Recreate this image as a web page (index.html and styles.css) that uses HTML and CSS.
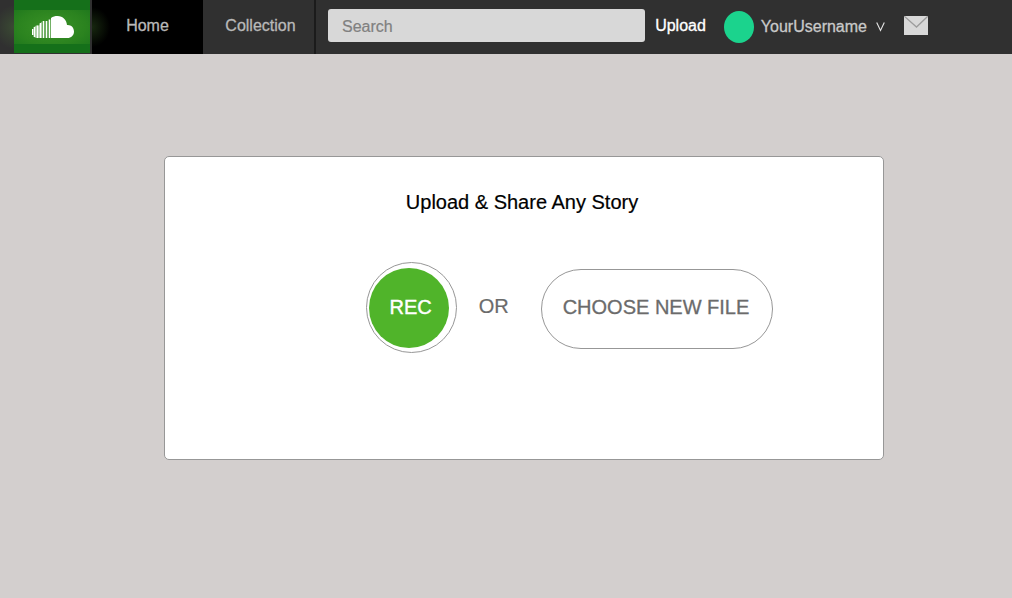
FILE: index.html
```html
<!DOCTYPE html>
<html lang="en">
<head>
<meta charset="utf-8">
<meta name="viewport" content="width=device-width, initial-scale=1">
<title>Upload</title>
<link rel="stylesheet" href="styles.css">
</head>
<body>
<header class="topbar">
  <a class="logo" href="#" aria-label="Start page">
    <svg class="logo-cloud" viewBox="0 0 42 22" aria-hidden="true">
      <path class="cloud" d="M19 22V2C21 .6 23 0 25.500 0C31 0 34.600 4 35 9C39 8.600 42 11.500 42 15.500C42 19.500 39 22 35.500 22Z"/>
      <path class="haze" d="M2 11L4 9.500H7L8.500 7L10 5.500V22H4L2 21Z"/>
      <path class="bar" d="M.5 13v6M2.500 11v10M5.500 9.500v12.500M8.500 7v15M11.500 5v17M14.500 5v17M17.500 3.500v18.500"/>
    </svg>
  </a>
  <nav class="nav">
    <a class="nav-link nav-current" href="#" aria-current="page">Home</a>
    <a class="nav-link" href="#">Collection</a>
  </nav>
  <input class="search" type="search" placeholder="Search" aria-label="Search">
  <a class="upload" href="#">Upload</a>
  <button class="account" type="button">
    <span class="avatar"></span>
    <span class="username">YourUsername</span>
    <svg class="chevron" viewBox="0 0 9 10" aria-hidden="true"><path d="M.7.5L4.500 8.500L8.300.5"/></svg>
  </button>
  <button class="mail" type="button" aria-label="Messages">
    <svg class="mail-icon" viewBox="0 0 24 19" aria-hidden="true"><rect width="24" height="19"/><path d="M0 0L12.500 11L24 0"/></svg>
  </button>
</header>
<main class="page">
  <section class="card">
    <h1 class="title">Upload &amp; Share Any Story</h1>
    <div class="actions">
      <button class="record" type="button"><span class="record-disc">REC</span></button>
      <span class="or">OR</span>
      <button class="choose" type="button">CHOOSE NEW FILE</button>
    </div>
  </section>
</main>
</body>
</html>
```
FILE: styles.css
```css
* {
  box-sizing: border-box;
}

body {
  margin: 0;
  min-height: 100vh;
  background: #d3cfce;
  color: #000;
  font-family: "Liberation Sans", Arial, sans-serif;
  font-size: 16px;
}

button {
  padding: 0;
  border: 0;
  background: none;
  color: inherit;
  font: inherit;
  cursor: pointer;
}

a {
  color: inherit;
  text-decoration: none;
}

.topbar {
  display: flex;
  align-items: center;
  height: 54px;
  padding-left: 14px;
  background: radial-gradient(ellipse 20px 22px at 14px 27px, #3a4a33, #303030);
}

.logo {
  display: flex;
  flex: none;
  align-items: center;
  justify-content: center;
  align-self: flex-start;
  width: 76px;
  height: 53px;
  margin-right: 2px;
  background:
    radial-gradient(ellipse 56px 30px at center, #3a9226, #2b831f 60%, #1b741c) center / 100% 34px no-repeat,
    #15701a;
}

.logo-cloud {
  width: 42px;
  height: 22px;
  margin-left: 2px;
}

.cloud {
  fill: #fff;
}

.bar {
  fill: none;
  stroke: #fff;
  stroke-width: 1.6;
}

.haze {
  fill: #fff;
  opacity: .45;
}

.nav {
  display: flex;
  align-self: stretch;
  border-right: 2px solid #1b1b1b;
  color: #b9b9b9;
}

.nav-link {
  display: flex;
  align-items: center;
  justify-content: center;
  width: 111px;
  padding: 0 0 2px 4px;
  -webkit-text-stroke: .3px;
}

.nav-current {
  padding-left: 0;
  background: radial-gradient(ellipse 18px 20px at 0 27px, #17280f, #000);
}

.search {
  flex: 1;
  min-width: 80px;
  height: 33px;
  margin: 0 10px 3px 12px;
  padding: 2px 14px 0;
  border: 0;
  border-radius: 3px;
  background: #d8d8d8;
  color: #333;
  font: inherit;
}

.search::placeholder {
  color: #808080;
  opacity: 1;
  -webkit-text-stroke: .2px;
}

.upload {
  margin-right: 18px;
  padding-bottom: 3px;
  color: #fff;
  -webkit-text-stroke: .3px;
}

.account {
  display: flex;
  align-items: center;
  color: #c9c9c9;
}

.avatar {
  width: 30px;
  height: 32px;
  margin-right: 7px;
  border-radius: 50%;
  background: #1bd38d;
}

.username {
  margin-right: 9px;
  -webkit-text-stroke: .3px;
}

.chevron {
  width: 9px;
  height: 10px;
  fill: none;
  stroke: #e4e4e4;
  stroke-width: 1.1;
}

.mail {
  display: flex;
  margin: 0 84px 3px 19px;
}

.mail-icon {
  width: 24px;
  height: 19px;
  fill: #d8d8d8;
}

.mail-icon path {
  fill: none;
  stroke: #9c9c9c;
  stroke-width: 1.3;
}

.page {
  padding: 102px 128px 102px 164px;
}

.card {
  padding: 33px 0 106px;
  border: 1px solid #979797;
  border-radius: 5px;
  background: #fff;
}

.title {
  margin: 0 4px 48px 0;
  font-size: 20px;
  font-weight: 400;
  line-height: 24px;
  text-align: center;
  -webkit-text-stroke: .2px;
}

.actions {
  display: flex;
  align-items: center;
  justify-content: center;
  padding-left: 91px;
  color: #6b6b6b;
  font-size: 20px;
  line-height: 24px;
}

.record {
  width: 91px;
  height: 91px;
  padding: 4px 7px 4px 2px;
  border: 1px solid #979797;
  border-radius: 50%;
}

.record-disc {
  display: flex;
  align-items: center;
  justify-content: center;
  height: 80px;
  padding: 0 0 2px 4px;
  border-radius: 50%;
  background: #50b42a;
  color: #fff;
  -webkit-text-stroke: .4px;
}

.or {
  margin: 0 32px 4px 22px;
  -webkit-text-stroke: .2px;
}

.choose {
  height: 80px;
  margin-top: 2px;
  padding: 0 23px 4px 21px;
  border: 1px solid #979797;
  border-radius: 40px;
  -webkit-text-stroke: .3px;
}
```
